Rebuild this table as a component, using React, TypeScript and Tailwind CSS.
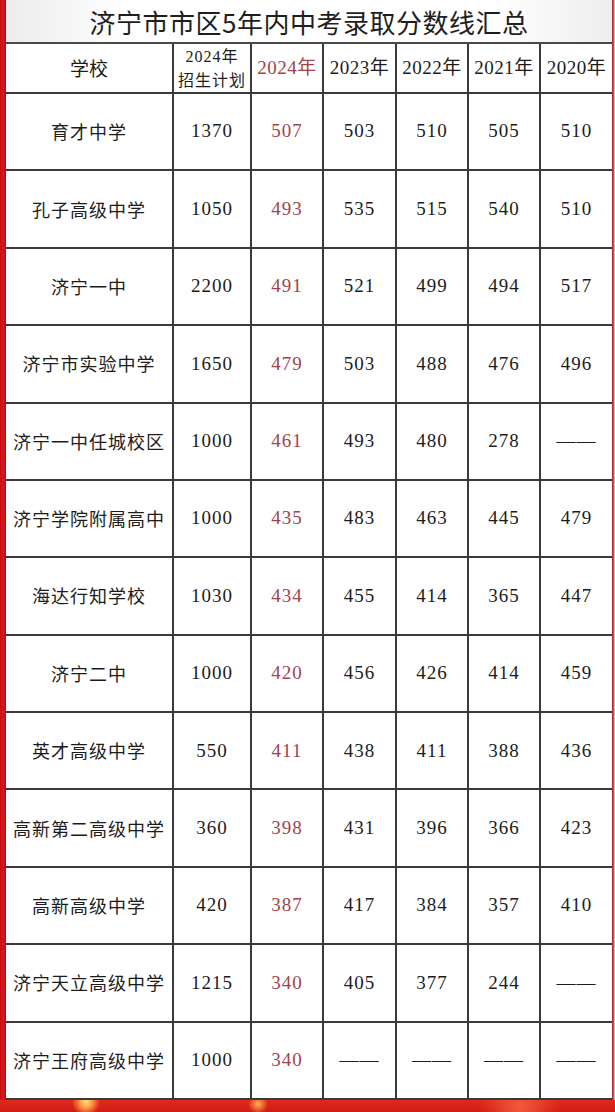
import React from "react";

const rows: string[][] = [
  ["育才中学", "1370", "507", "503", "510", "505", "510"],
  ["孔子高级中学", "1050", "493", "535", "515", "540", "510"],
  ["济宁一中", "2200", "491", "521", "499", "494", "517"],
  ["济宁市实验中学", "1650", "479", "503", "488", "476", "496"],
  ["济宁一中任城校区", "1000", "461", "493", "480", "278", "——"],
  ["济宁学院附属高中", "1000", "435", "483", "463", "445", "479"],
  ["海达行知学校", "1030", "434", "455", "414", "365", "447"],
  ["济宁二中", "1000", "420", "456", "426", "414", "459"],
  ["英才高级中学", "550", "411", "438", "411", "388", "436"],
  ["高新第二高级中学", "360", "398", "431", "396", "366", "423"],
  ["高新高级中学", "420", "387", "417", "384", "357", "410"],
  ["济宁天立高级中学", "1215", "340", "405", "377", "244", "——"],
  ["济宁王府高级中学", "1000", "340", "——", "——", "——", "——"],
];

const cjk = "font-['Noto_Sans_CJK_SC',sans-serif]";
const num = "font-['Liberation_Serif','Noto_Sans_CJK_SC',serif]";

function Cell({
  children,
  last,
  className = "",
}: {
  children: React.ReactNode;
  last?: boolean;
  className?: string;
}) {
  return (
    <div
      className={
        "flex items-center justify-center border-b-2 border-[#3a3a3a] " +
        (last ? "" : "border-r-2 ") +
        className
      }
    >
      {children}
    </div>
  );
}

export default function App() {
  return (
    <div className="w-[615px] h-[1112px] flex flex-col bg-[#d3201a] overflow-hidden">
      <div className="flex h-[1100px]">
        <div className="w-[6px] bg-[linear-gradient(90deg,#c50f16,#d81a1c_60%,#a80d14)]" />
        <div className="w-[606px] flex flex-col bg-white">
          <div
            className={
              "h-[44px] flex items-center justify-center border-b-2 border-[#4a4a4a] text-[26px] tracking-[0.5px] text-[#1e1e1e] bg-[linear-gradient(90deg,#ececec,#ffffff_20%,#ffffff_80%,#eeeeee)] " +
              cjk
            }
          >
            济宁市市区5年内中考录取分数线汇总
          </div>
          <div className="flex-1 grid grid-cols-[168px_78px_72px_73px_72px_72px_71px] grid-rows-[50px_repeat(13,1fr)] text-[#1c1c1c]">
            <Cell className={"text-[19px] " + cjk}>学校</Cell>
            <Cell className={"flex-col text-[16px] leading-[23px] tracking-[1px] " + num}>
              <span>2024年</span>
              <span className={cjk + " leading-[23px]"}>招生计划</span>
            </Cell>
            <Cell className={"text-[19px] tracking-[0.5px] text-[#a3434b] " + num}>2024年</Cell>
            <Cell className={"text-[19px] tracking-[0.5px] " + num}>2023年</Cell>
            <Cell className={"text-[19px] tracking-[0.5px] " + num}>2022年</Cell>
            <Cell className={"text-[19px] tracking-[0.5px] " + num}>2021年</Cell>
            <Cell last className={"text-[19px] tracking-[0.5px] " + num}>2020年</Cell>
            {rows.map((r, i) => (
              <React.Fragment key={i}>
                <Cell className={"text-[18px] tracking-[1px] whitespace-nowrap " + cjk}>{r[0]}</Cell>
                {r.slice(1).map((v, j) => (
                  <Cell
                    key={j}
                    last={j === 5}
                    className={
                      "text-[19px] tracking-[1px] " +
                      num +
                      (j === 1 ? " text-[#9f444c]" : "")
                    }
                  >
                    {v}
                  </Cell>
                ))}
              </React.Fragment>
            ))}
          </div>
        </div>
        <div className="w-[3px] bg-[linear-gradient(90deg,#a8222e,#b83a46_40%,#e6dede)]" />
      </div>
      <div className="h-[12px] bg-[radial-gradient(circle_at_86px_2px,#ffe08a_0,#ff9a40_6px,transparent_14px),radial-gradient(circle_at_258px_4px,#ffb050_0,transparent_10px),radial-gradient(circle_at_520px_6px,#f25a3a_0,transparent_40px),linear-gradient(180deg,#e02a1c,#d01c14)]" />
    </div>
  );
}
